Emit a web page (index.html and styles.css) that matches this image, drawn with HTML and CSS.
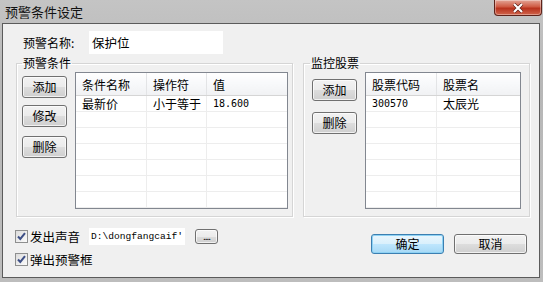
FILE: index.html
```html
<!DOCTYPE html>
<html lang="zh-CN">
<head>
  <meta charset="UTF-8" />
  <title>预警条件设定</title>
  <link rel="stylesheet" href="styles.css">
</head>
<body>
  <div class="window">
    <div class="titlebar">
      <div class="title">预警条件设定</div>
      <button class="close" title="关闭">
        <svg width="14" height="10" viewBox="0 0 14 10">
          <path d="M3 1 L11 9 M11 1 L3 9" stroke="#5a1a12" stroke-width="3.4" />
          <path d="M3 1 L11 9 M11 1 L3 9" stroke="#fff" stroke-width="2.2" />
        </svg>
      </button>
    </div>

    <div class="client">
      <div class="name-row">
        <span class="name-label">预警名称:</span>
        <div class="name-input">保护位</div>
      </div>

      <div class="groups">
        <fieldset class="group group-cond">
          <legend>预警条件</legend>
          <div class="group-body">
            <div class="side-btns">
              <button class="btn btn-add">添加</button>
              <button class="btn btn-edit">修改</button>
              <button class="btn btn-del">删除</button>
            </div>
            <div class="list list-cond">
              <table>
                <thead>
                  <tr><th class="c1">条件名称</th><th class="c2">操作符</th><th>值</th></tr>
                </thead>
                <tbody>
                  <tr><td>最新价</td><td>小于等于</td><td class="num">18.600</td></tr>
                  <tr><td></td><td></td><td></td></tr>
                  <tr><td></td><td></td><td></td></tr>
                  <tr><td></td><td></td><td></td></tr>
                  <tr><td></td><td></td><td></td></tr>
                  <tr><td></td><td></td><td></td></tr>
                  <tr><td></td><td></td><td></td></tr>
                </tbody>
              </table>
            </div>
          </div>
        </fieldset>

        <fieldset class="group group-stock">
          <legend>监控股票</legend>
          <div class="group-body">
            <div class="side-btns">
              <button class="btn btn-add2">添加</button>
              <button class="btn btn-del2">删除</button>
            </div>
            <div class="list list-stock">
              <table>
                <thead>
                  <tr><th class="s1">股票代码</th><th>股票名</th></tr>
                </thead>
                <tbody>
                  <tr><td class="num">300570</td><td>太辰光</td></tr>
                  <tr><td></td><td></td></tr>
                  <tr><td></td><td></td></tr>
                  <tr><td></td><td></td></tr>
                  <tr><td></td><td></td></tr>
                  <tr><td></td><td></td></tr>
                  <tr><td></td><td></td></tr>
                </tbody>
              </table>
            </div>
          </div>
        </fieldset>
      </div>

      <div class="bottom">
        <div class="options">
          <div class="opt-row">
            <span class="check"><svg width="13" height="13" viewBox="0 0 13 13"><path d="M3 6.5 L5.3 9 L10 3.2" fill="none" stroke="#3d4f86" stroke-width="2" /></svg></span>
            <span class="opt-label">发出声音</span>
            <div class="path-input">D:\dongfangcaif'</div>
            <button class="btn btn-browse">....</button>
          </div>
          <div class="opt-row">
            <span class="check"><svg width="13" height="13" viewBox="0 0 13 13"><path d="M3 6.5 L5.3 9 L10 3.2" fill="none" stroke="#3d4f86" stroke-width="2" /></svg></span>
            <span class="opt-label">弹出预警框</span>
          </div>
        </div>
        <div class="dialog-btns">
          <button class="btn btn-ok">确定</button>
          <button class="btn btn-cancel">取消</button>
        </div>
      </div>
    </div>
  </div>
</body>
</html>
```

FILE: styles.css
```css
body {
  margin: 0;
  font-family: "Noto Sans CJK SC", "Noto Sans", sans-serif;
  font-size: 12px;
  color: #000;
  background: #b9b9b9;
}

.window {
  width: 543px;
  height: 282px;
  box-sizing: border-box;
  padding: 0 3px 4px 2px;
  display: flex;
  flex-direction: column;
  background: linear-gradient(to bottom, #c4c4c4, #b7b7b7 30%, #bdbdbd);
}

.titlebar {
  height: 23px;
  display: flex;
  justify-content: space-between;
  align-items: flex-start;
}
.title {
  font-size: 13px;
  line-height: 23px;
  padding-left: 3px;
  color: #111;
}
.close {
  width: 48px;
  height: 16px;
  margin-right: -2px;
  padding: 0;
  border: 1px solid #5e2219;
  border-top: none;
  border-radius: 0 0 4px 4px;
  background: linear-gradient(to bottom, #e3a597, #cf5a43 45%, #b8321d 55%, #d0654c);
  display: flex;
  align-items: center;
  justify-content: center;
  box-shadow: inset 0 0 0 1px rgba(255,255,255,0.35);
}

.client {
  flex: 1;
  border: 1px solid #5b5b5b;
  background: #f0f0f0;
}

.name-row {
  display: flex;
  align-items: center;
  margin-top: 7px;
  padding-left: 20px;
  height: 23px;
}
.name-label { width: 66px; }
.name-input {
  width: 131px;
  height: 23px;
  line-height: 23px;
  padding-left: 3px;
  background: #fff;
  font-size: 12.5px;
}

.groups {
  display: flex;
  gap: 10px;
  margin-top: 2px;
  padding-left: 13px;
}
.group {
  margin: 0;
  padding: 2px 4px 7px 5px;
  border: 1px solid #d5d5d5;
  box-shadow: 1px 1px 0 #fff, inset 1px 1px 0 #fff;
  box-sizing: border-box;
}
.group legend {
  padding: 0 1px;
  line-height: 14px;
}
.group-cond { width: 277px; }
.group-stock { width: 227px; padding-left: 8px; padding-right: 8px; }
.group-stock legend { margin-left: -2px; }

.group-body {
  display: flex;
  gap: 8px;
}
.side-btns {
  width: 45px;
  display: flex;
  flex-direction: column;
}

.btn {
  font-family: inherit;
  font-size: 12px;
  color: #000;
  padding: 0;
  border: 1px solid #707070;
  border-radius: 3px;
  background: linear-gradient(to bottom, #f2f2f2, #ebebeb 50%, #dddddd 51%, #cfcfcf);
  box-shadow: inset 0 0 0 1px rgba(255,255,255,0.7);
  height: 22px;
  line-height: 18px;
}
.side-btns .btn { width: 45px; }
.btn-add { margin-top: 4px; }
.btn-edit { margin-top: 7px; }
.btn-del { margin-top: 9px; }
.btn-add2 { margin-top: 7px; }
.btn-del2 { margin-top: 11px; }

.list {
  height: 137px;
  box-sizing: border-box;
  border: 1px solid #828790;
  background: #fff;
  overflow: hidden;
}
.list-cond { width: 213px; }
.list-stock { width: 156px; }

.list table {
  width: 100%;
  border-collapse: collapse;
  table-layout: fixed;
}
.list th {
  height: 22px;
  padding: 0 6px;
  font-weight: normal;
  text-align: left;
  background: linear-gradient(to bottom, #ffffff, #f7f8fa 50%, #f1f2f4);
  border-bottom: 1px solid #d5d5d5;
  border-right: 1px solid #e3e4e6;
}
.list td {
  height: 15px;
  padding: 0 6px;
  line-height: 15px;
  border-bottom: 1px solid #ededed;
  border-right: 1px solid #ededed;
  white-space: nowrap;
}
.list th:last-child, .list td:last-child { border-right: none; }
.list .c1 { width: 58px; }
.list .c2 { width: 47px; }
.list .s1 { width: 58px; }
.list .num {
  font-family: "DejaVu Sans Mono", monospace;
  font-size: 10px;
}

.bottom {
  display: flex;
  justify-content: space-between;
  align-items: flex-start;
}
.options {
  margin-top: 10px;
  padding-left: 12px;
}
.opt-row {
  display: flex;
  align-items: center;
  height: 18px;
}
.opt-row + .opt-row { margin-top: 5px; }
.check {
  width: 13px;
  height: 13px;
  box-sizing: border-box;
  border: 1px solid #8e8f8f;
  background: linear-gradient(135deg, #dcdcdc, #fbfbfb);
  display: flex;
  align-items: center;
  justify-content: center;
  margin-right: 2px;
}
.check svg { flex: none; }
.opt-label { font-size: 12.5px; }
.path-input {
  margin-left: 9px;
  width: 94px;
  height: 17px;
  line-height: 17px;
  padding-left: 2px;
  background: #fff;
  font-family: "Liberation Mono", monospace;
  font-size: 9.6px;
  white-space: nowrap;
  overflow: hidden;
}
.btn-browse {
  margin-left: 10px;
  width: 23px;
  height: 15px;
  line-height: 10px;
  font-size: 10px;
  letter-spacing: -1px;
}

.dialog-btns {
  display: flex;
  gap: 10px;
  margin-top: 17px;
  margin-right: 12px;
}
.dialog-btns .btn {
  width: 73px;
  height: 20px;
  line-height: 16px;
}
.btn-ok {
  border-color: #3c7fb1;
  background: linear-gradient(to bottom, #eaf6fd, #d9f0fc 50%, #bee6fd 51%, #a7d9f5);
  box-shadow: inset 0 0 0 1px #8ed2f4;
}
```
